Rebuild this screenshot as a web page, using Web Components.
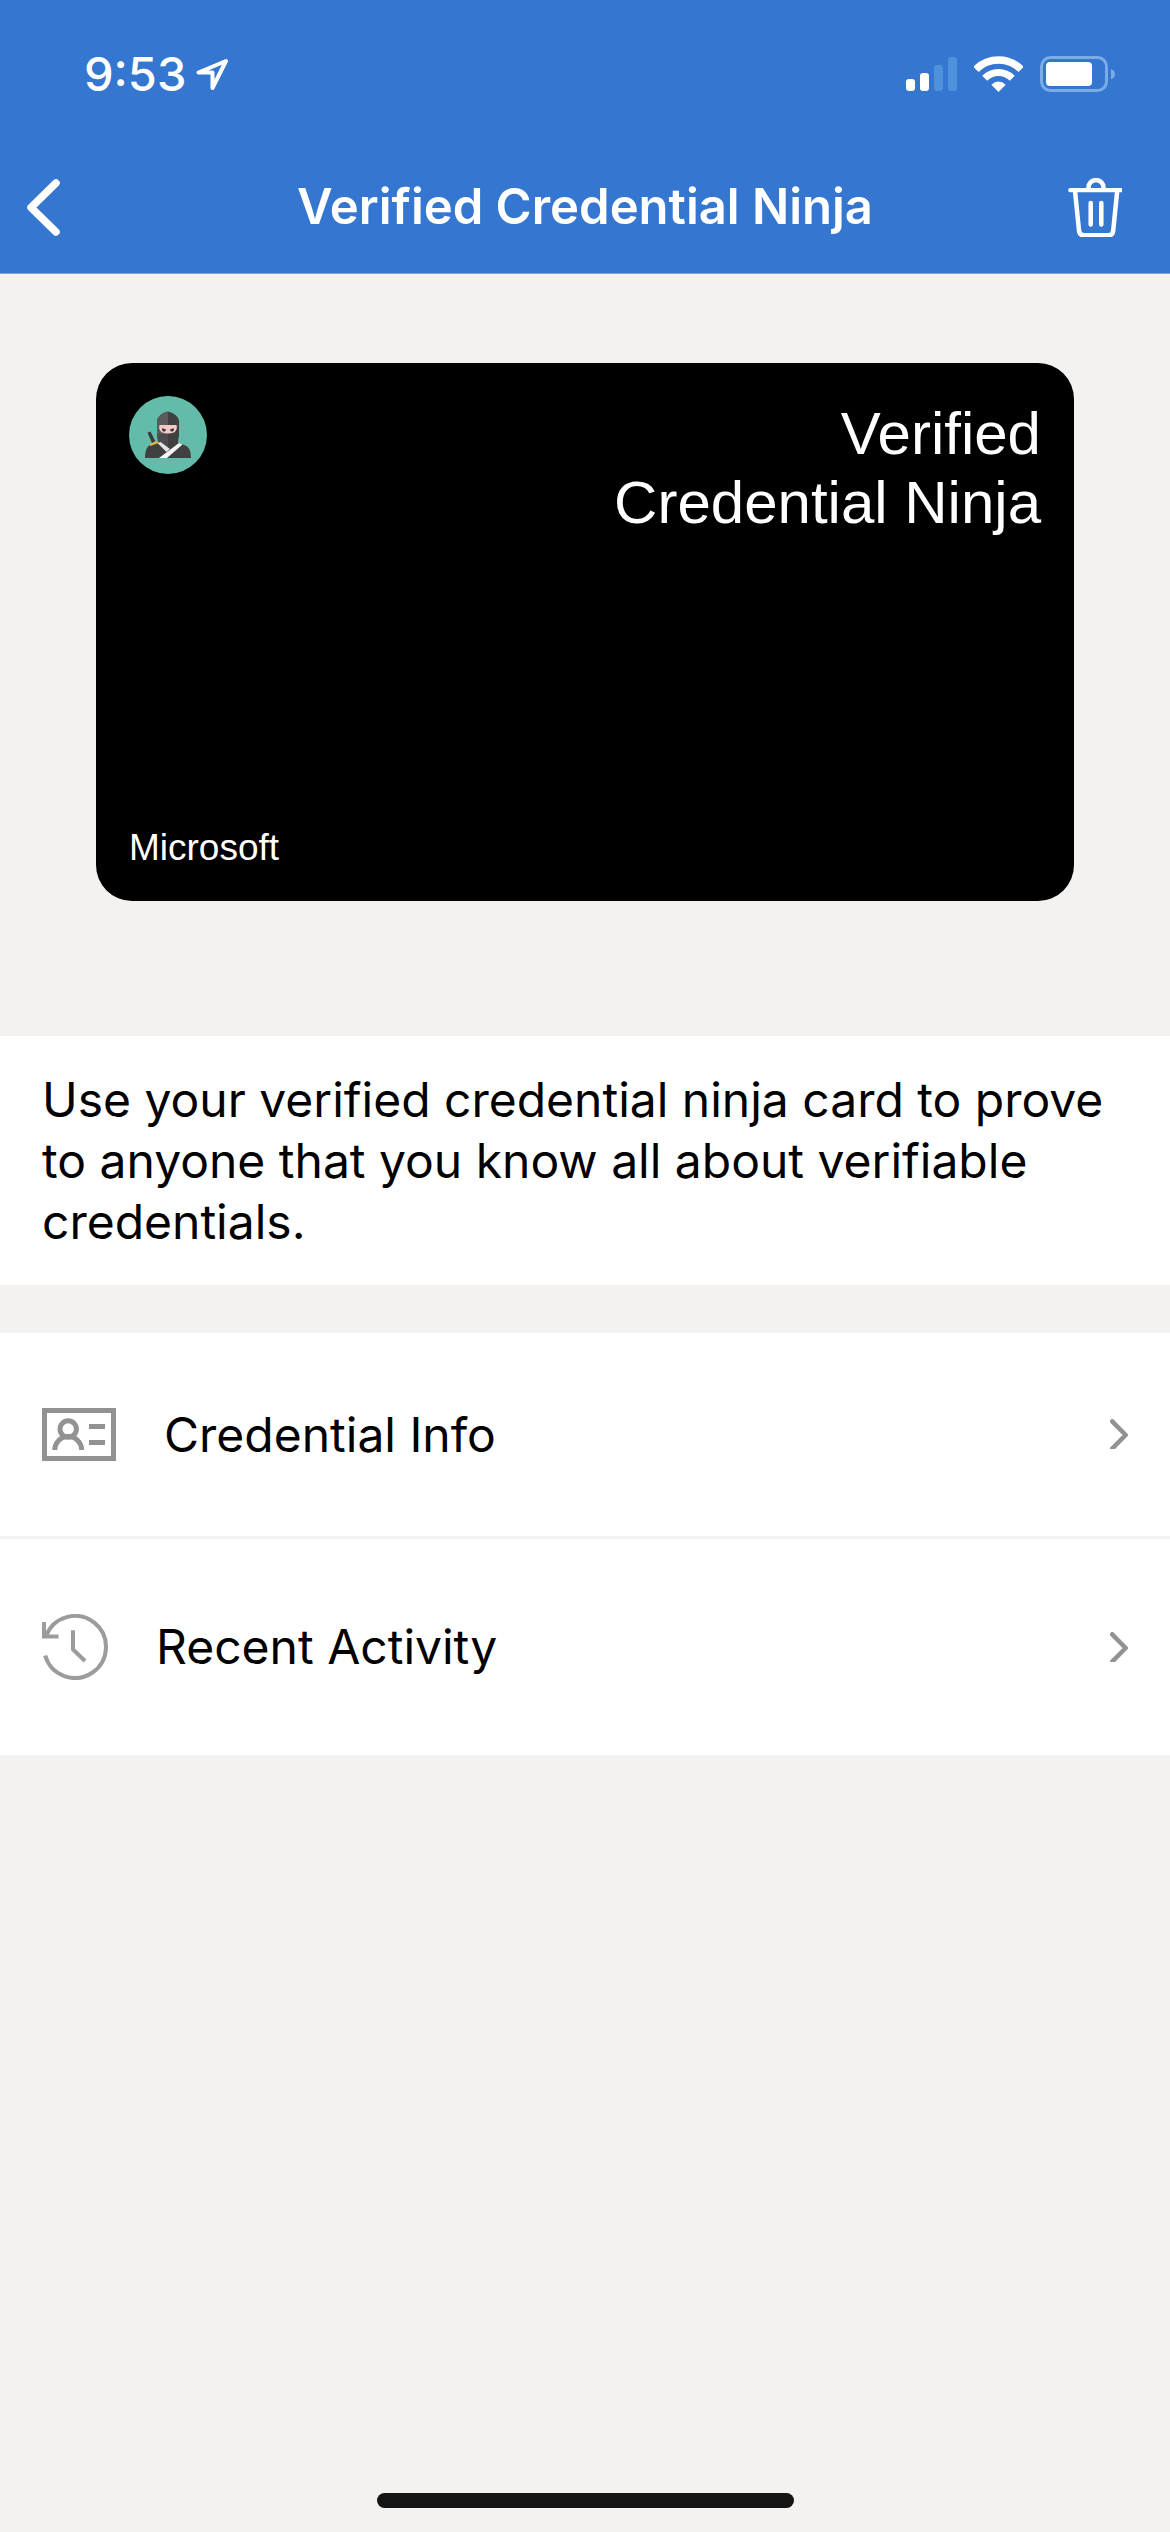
<!DOCTYPE html>
<html lang="en">
<head>
<meta charset="utf-8">
<meta name="viewport" content="width=device-width, initial-scale=1">
<title>Verified Credential Ninja</title>
<style>
  body { margin: 0; background: #f3f2f0; color: #000; font-family: Inter, "Liberation Sans", sans-serif; }
</style>
</head>
<body>
<credential-screen></credential-screen>

<script>
class BaseElement extends HTMLElement {
  constructor() {
    super();
    this.attachShadow({ mode: "open" }).innerHTML =
      `<style>*{box-sizing:border-box} svg{display:block;flex:none}</style>` + this.render();
  }
}

customElements.define("status-bar", class extends BaseElement {
  render() { return `
    <style>
      :host { display: flex; justify-content: space-between; align-items: center; padding: 44px 55px 37px 84px; color: #fff; }
      .side { display: flex; align-items: center; height: 60px; }
      time { font-size: 47px; font-weight: 500; line-height: 60px; }
      .left { gap: 10px; }
      .right { gap: 17px; }
    </style>
    <div class="side left">
      <time>9:53</time>
      <svg width="33" height="33" viewBox="0 0 33 33" fill="none" stroke="#fff" stroke-width="4" stroke-linejoin="round" aria-hidden="true">
        <path d="M30 3 2.500 14.500 16.500 14.500 16.500 30Z"/>
      </svg>
    </div>
    <div class="side right">
      <svg width="51" height="34" viewBox="0 0 51 34" fill="#fff" aria-hidden="true">
        <rect y="22" width="9" height="12" rx="3"/><rect x="14" y="16" width="9" height="18" rx="3"/>
        <g fill="#4e92db"><rect x="28" y="8" width="9" height="26" rx="3"/><rect x="42" width="9" height="34" rx="3"/></g>
      </svg>
      <svg width="49" height="36" viewBox="0 0 49 36" fill="none" stroke="#fff" aria-hidden="true">
        <path stroke-width="7.500" d="M1.900 13.400A32 32 0 0 1 47.100 13.400"/>
        <path stroke-width="7" d="M10.700 22.200A19.500 19.500 0 0 1 38.300 22.200"/>
        <path fill="#fff" stroke="none" d="M24.500 36 17.300 28.700Q24.500 22.500 31.700 28.700Z"/>
      </svg>
      <svg width="75" height="36" viewBox="0 0 75 36" aria-hidden="true">
        <rect x="1.500" y="1.500" width="65" height="33" rx="9" fill="none" stroke="#79ade4" stroke-width="3"/>
        <rect x="6" y="6" width="46" height="24" rx="4" fill="#fff"/>
        <path d="M71 13Q75 14.500 75 18T71 23.500Z" fill="#79ade4"/>
      </svg>
    </div>`; }
});

customElements.define("nav-bar", class extends BaseElement {
  render() { return `
    <style>
      :host { display: grid; grid-template-columns: 1fr auto 1fr; align-items: center; height: 132px; color: #fff; }
      h1 { margin: 0; font-size: 49px; font-weight: 600; line-height: 60px; grid-column: 2; }
      button { border: 0; padding: 0; background: none; color: inherit; }
      .del { justify-self: end; padding-right: 48px; }
      .back { justify-self: start; padding-left: 27px; }
    </style>
    <button class="back" aria-label="Back">
      <svg width="33" height="57" viewBox="0 0 33 57" fill="none" stroke="currentColor" stroke-width="7.500" stroke-linecap="round" stroke-linejoin="round"><path d="M29 4 4 28.500 29 53"/></svg>
    </button>
    <h1><slot></slot></h1>
    <button class="del" aria-label="Delete">
      <svg width="54" height="59" viewBox="0 0 54 59" fill="none" stroke="currentColor" stroke-width="4.500">
        <path d="M20.500 11.500V9.500a7.500 7.500 0 0 1 15 0V11.500"/>
        <path d="M54 12.200H2.500" stroke-width="4.300"/><circle cx="2.300" cy="12.200" r="2.100" fill="currentColor" stroke="none"/>
        <path d="M7 13 11 52.500Q11.500 57.300 15.500 57.300H41Q44.700 57.300 45.200 52.500L49.200 13"/>
        <path d="M22.700 25V46.500M33.300 25V46.500" stroke-linecap="round"/>
      </svg>
    </button>`; }
});

customElements.define("ninja-avatar", class extends BaseElement {
  render() { return `
    <style>:host { display: block; }</style>
    <svg width="78" height="78" viewBox="0 0 78 78" role="img" aria-label="Ninja">
      <circle cx="39" cy="39" r="39" fill="#63bca9"/>
      <path d="M18.500 36.800 21.500 35.500 26.200 45 23 47Z" fill="#3a3a3a"/>
      <path d="M16 62Q16 49 24 48L31 46H47L54 48.500Q62 50 62 62Z" fill="#404040"/>
      <path d="M28 25Q29 18 39 15.500Q49 18 50 25V40Q49 43 49 47L39 54 29 47Q29 42 28 40Z" fill="#404040"/>
      <path d="M28 25Q29 18 39 15.500V54L29 47Q29 42 28 40Z" fill="#585a5c"/>
      <path d="M28 38 39 38V54L29 47Q29 42 28 40Z" fill="#4b4c4d"/>
      <path d="M30.500 29H47.500Q49 34 45 36.500Q39 38.500 33 36.500Q29 34 30.500 29Z" fill="#f3c8c5"/>
      <path d="M33 32 37 33.500A2 2 0 1 1 33.500 32.200ZM45 32 41 33.500A2 2 0 1 0 44.500 32.200Z" fill="#383838"/>
      <path d="M28.500 47 31.500 46 41 53 37.500 56Z" fill="#e3e3e9"/>
      <path d="M30 62 50 47 53.500 48.500 38 62Z" fill="#f5f5f7"/>
      <path d="M20.500 48.500 28.500 45 29.500 47 21.500 50Z" fill="#edb536"/>
    </svg>`; }
});

customElements.define("credential-card", class extends BaseElement {
  render() { return `
    <style>
      :host { display: flex; flex-direction: column; justify-content: space-between; aspect-ratio: 20 / 11; padding: 33px 33px 32px;
        border-radius: 36px; background: #000; color: #fff; font-family: "Liberation Sans", Arial, sans-serif; }
      .top { display: flex; justify-content: space-between; align-items: flex-start; }
      h2 { margin: 0; padding-top: 3px; max-width: 50%; font-size: 60px; font-weight: 400; line-height: 69px; text-align: right; }
      p { margin: 0; font-size: 37px; line-height: 42px; }
    </style>
    <div class="top"><ninja-avatar></ninja-avatar><h2><slot></slot></h2></div>
    <p><slot name="issuer"></slot></p>`; }
});

customElements.define("menu-row", class extends BaseElement {
  render() { return `
    <style>
      :host { display: block; background: #fff; }
      a { display: flex; align-items: center; gap: 48px; padding: 75px 42px; color: inherit; text-decoration: none; }
      .label { flex: 1; font-size: 48px; line-height: 51px; }
    </style>
    <a href="#"><slot name="icon"></slot><span class="label"><slot></slot></span>
      <svg width="18" height="30" viewBox="0 0 18 30" fill="none" stroke="#929292" stroke-width="4.500" stroke-linecap="round" stroke-linejoin="round" aria-hidden="true"><path d="M2.200 2.300 15.700 16 2.200 29.700"/></svg>
    </a>`; }
});

customElements.define("info-icon", class extends BaseElement {
  render() { return `
    <style>:host { display: block; }</style>
    <svg width="74" height="53" viewBox="0 0 74 53" fill="none" stroke="#929292" stroke-width="5" aria-hidden="true">
      <rect x="2.500" y="2.500" width="69" height="48"/>
      <circle cx="26.200" cy="21" r="8.200"/>
      <path d="M12.800 42a13.400 13.400 0 0 1 26.800 0M47 18.500H63M47 34.500H63"/>
    </svg>`; }
});

customElements.define("history-icon", class extends BaseElement {
  render() { return `
    <style>:host { display: block; }</style>
    <svg width="66" height="66" viewBox="0 0 66 66" fill="none" stroke="#9c9c9c" stroke-width="4" aria-hidden="true">
      <path d="M3.200 41.500A31 31 0 1 0 4 22"/>
      <path d="M2 8V22.500H16.500"/>
      <path d="M31 16.300V35.500L43 47"/>
    </svg>`; }
});

customElements.define("home-indicator", class extends BaseElement {
  render() { return `
    <style>
      :host { display: flex; justify-content: center; padding-bottom: 24px; }
      div { width: 417px; height: 15px; border-radius: 8px; background: #141414; }
    </style><div></div>`; }
});

customElements.define("credential-screen", class extends BaseElement {
  render() { return `
    <style>
      :host { display: flex; flex-direction: column; min-height: 100vh; }
      header { background: #3476d0; border-bottom: 1px solid #8c9fbd; }
      main { flex: 1; }
      .stage { padding: 89px 96px 135px; }
      .about { margin: 0 0 48px; padding: 33px 42px; background: #fff; font-size: 48px; line-height: 61px; }
      nav { display: flex; flex-direction: column; gap: 3px; }
    </style>
    <header>
      <status-bar></status-bar>
      <nav-bar>Verified Credential Ninja</nav-bar>
    </header>
    <main>
      <div class="stage">
        <credential-card>Verified Credential Ninja<span slot="issuer">Microsoft</span></credential-card>
      </div>
      <p class="about">Use your verified credential ninja card to prove to anyone that you know all about verifiable credentials.</p>
      <nav>
        <menu-row><info-icon slot="icon"></info-icon>Credential Info</menu-row>
        <menu-row><history-icon slot="icon"></history-icon>Recent Activity</menu-row>
      </nav>
    </main>
    <home-indicator></home-indicator>`; }
});
</script>
</body>
</html>
